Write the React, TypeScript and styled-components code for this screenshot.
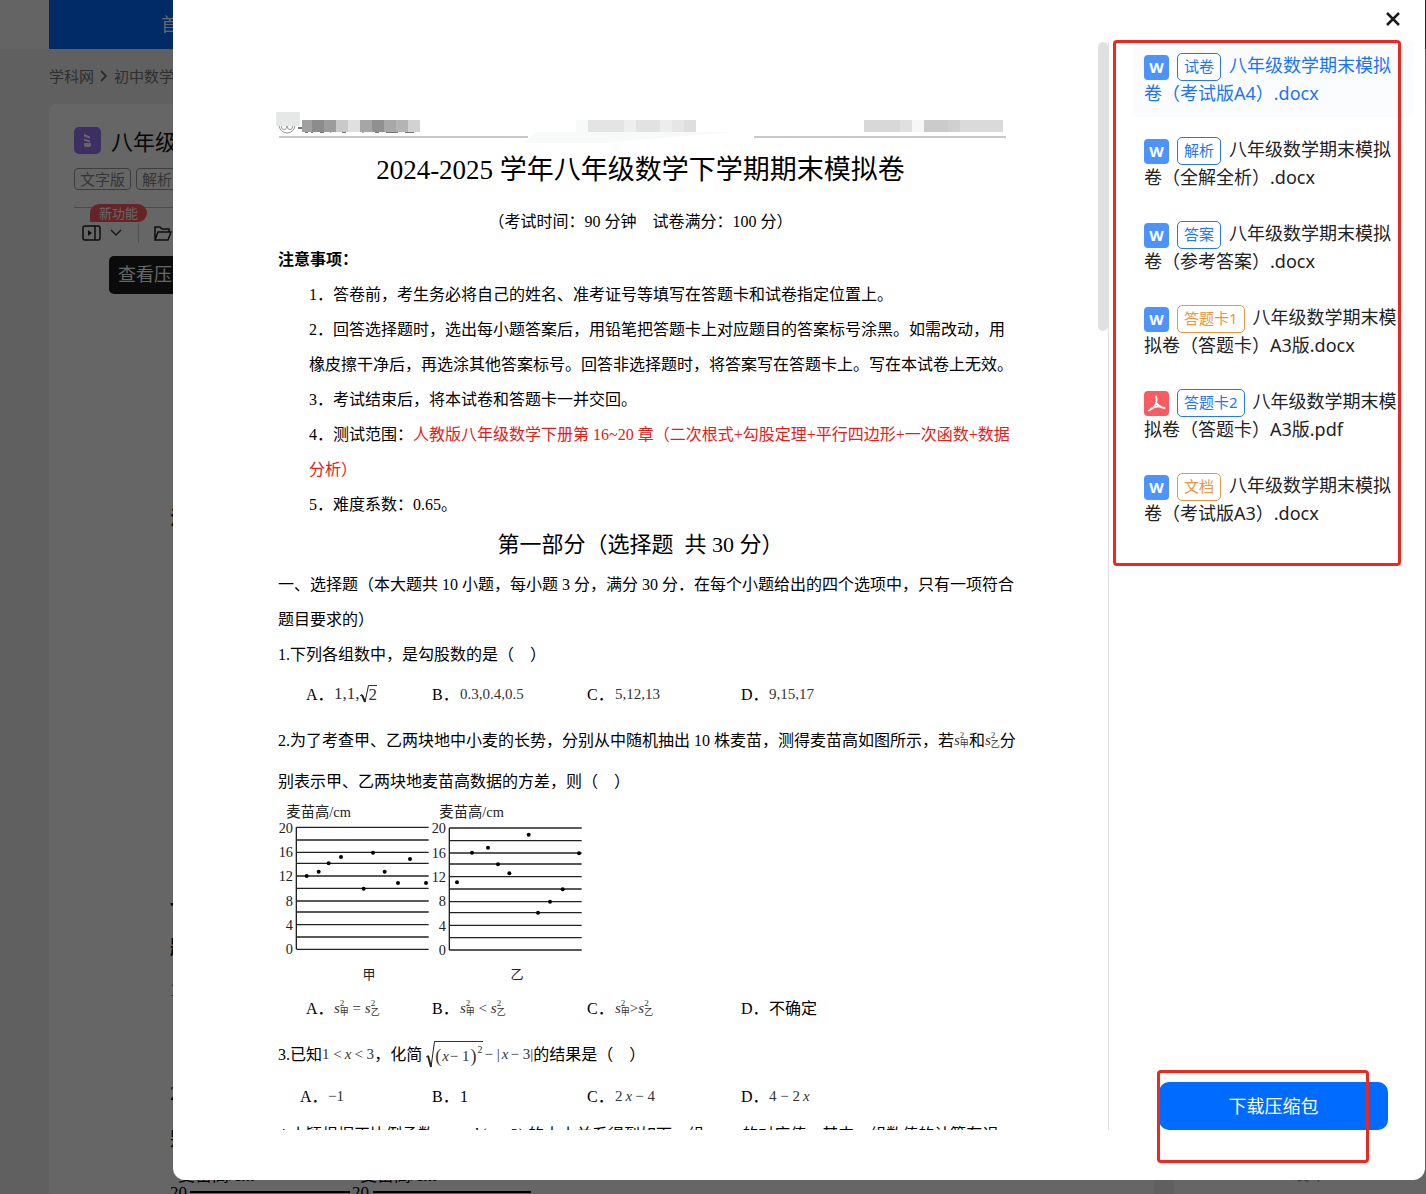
import React from "react";
import styled, { createGlobalStyle } from "styled-components";

const sans = `"Noto Sans", "Noto Sans CJK SC", sans-serif`;
const serif = `"Liberation Serif", "Noto Sans CJK SC", serif`;

const GlobalStyle = createGlobalStyle`
  * { box-sizing: border-box; }
  body { margin: 0; font-family: ${sans}; background: #f0f0f0; color: #222; }
  p, h1, h2, h3, ul, ol { margin: 0; padding: 0; font-weight: 400; }
  ul, ol { list-style: none; }
`;

/* ---------- page under the dialog ---------- */

const Page = styled.div`
  height: 100vh;
  overflow: hidden;
`;

const TopBar = styled.header`
  height: 49px;
  padding-left: 49px;
  background: #fafafa;
`;

const TopNav = styled.nav`
  height: 49px;
  padding-left: 112px;
  background: #006bff;
  a {
    color: #fff;
    font-size: 18px;
    line-height: 49px;
    text-decoration: none;
  }
`;

const Crumbs = styled.nav`
  display: flex;
  align-items: center;
  gap: 5px;
  height: 55px;
  padding: 0 0 2px 49px;
  font-size: 15px;
  white-space: nowrap;
  a {
    color: #777;
    text-decoration: none;
  }
`;

const Columns = styled.div`
  display: grid;
  grid-template-columns: minmax(0, 1fr) 252px;
  gap: 20px;
  height: 100%;
  padding-left: 49px;
`;

const Card = styled.section`
  padding: 19px 25px;
  border-radius: 8px 8px 0 0;
  background: #fff;
`;

const CardTitle = styled.h2`
  display: flex;
  align-items: center;
  gap: 10px;
  height: 34px;
  color: #111;
  font-size: 22px;
  white-space: nowrap;
`;

const Labels = styled.div`
  display: flex;
  gap: 5px;
  margin-top: 11px;
`;

const Label = styled.span`
  height: 22px;
  padding: 0 5px;
  border: 1px solid #999;
  border-radius: 4px;
  color: #888;
  font-size: 15px;
  line-height: 20px;
  white-space: nowrap;
`;

const Tools = styled.div`
  position: relative;
  display: flex;
  align-items: center;
  gap: 8px;
  height: 49px;
  margin-top: 17px;
  padding: 2px 8px 0;
  border-top: 1px solid #bbb;
  button {
    display: flex;
    padding: 0;
    border: 0;
    background: none;
  }
`;

const ToolRule = styled.span`
  width: 1px;
  height: 20px;
  margin: 0 6px 0 8px;
  background: #ccc;
`;

const NewBadge = styled.span`
  position: absolute;
  top: -4px;
  left: 16px;
  padding: 0 9px;
  border-radius: 9px 9px 9px 0;
  background: #ff5a60;
  color: #fff;
  font-size: 13px;
  line-height: 18px;
`;

const Hint = styled.span`
  display: inline-block;
  height: 38px;
  margin-left: 35px;
  padding: 0 9px;
  border-radius: 5px;
  background: #1c1c1c;
  color: #fff;
  font-size: 18px;
  line-height: 36px;
`;

const BackDoc = styled.div`
  padding-left: 96px;
  color: #000;
  font-family: ${serif};
  font-size: 19px;
  line-height: 42px;
`;

const BackLine = styled.p<{ $gap?: number; $bold?: boolean }>`
  margin-top: ${(p) => p.$gap ?? 0}px;
  font-weight: ${(p) => (p.$bold ? 700 : 400)};
  white-space: nowrap;
`;

const Aside = styled.aside`
  padding: 1058px 36px 0;
  background: #fff;
  color: #999;
  font-size: 16px;
  line-height: 24px;
  white-space: nowrap;
`;

/* ---------- dialog ---------- */

const Overlay = styled.div`
  position: fixed;
  inset: 0;
  display: flex;
  padding: 0 1px 14px 173px;
  background: rgba(0, 0, 0, 0.6);
`;

const Dialog = styled.div`
  display: flex;
  flex: 1;
  min-width: 0;
  border-radius: 0 0 12px 12px;
  background: #fff;
`;

const Preview = styled.main`
  display: flex;
  flex: 1;
  min-width: 0;
  margin: 42px 0 50px;
  border-right: 1px solid #e0e0e0;
  overflow: hidden;
`;

const Paper = styled.article`
  flex: 1;
  min-width: 0;
  padding: 68px 95px 0 105px;
  color: #000;
  font-family: ${serif};
  font-size: 16px;
  line-height: 35px;
  white-space: nowrap;
`;

const Thumb = styled.div`
  width: 10px;
  height: 289px;
  border-radius: 5px;
  background: #e0e0e0;
`;

const PaperHead = styled.svg`
  display: block;
  width: 100%;
  height: 32px;
  overflow: visible;
`;

const PaperTitle = styled.h1`
  margin-top: 8px;
  font-size: 27px;
  line-height: 40px;
  text-align: center;
`;

const PaperMeta = styled.p`
  margin-top: 14px;
  text-align: center;
`;

const NotesHead = styled.h3`
  margin-top: 3px;
  font-size: 16px;
  font-weight: 700;
`;

const Notes = styled.div`
  padding-left: 31px;
`;

const Red = styled.span`
  color: #e0201b;
`;

const PartTitle = styled.h2`
  font-size: 22px;
  line-height: 45px;
  text-align: center;
`;

const Stem = styled.p`
  display: flex;
  align-items: center;
  height: 40px;
  margin-top: 6px;
`;

const StemRest = styled.p`
  line-height: 43px;
`;

const LastLine = styled.p`
  margin-top: 1px;
`;

const Options = styled.ol<{ $indent: number }>`
  display: grid;
  grid-template-columns: ${(p) => 154 - p.$indent}px 155px 154px 1fr;
  margin-top: 2px;
  padding-left: ${(p) => p.$indent}px;
  li {
    display: flex;
    align-items: center;
    height: 40px;
  }
`;

const Letter = styled.span`
  width: 28px;
`;

const Formula = styled.span<{ $size?: number; $gap?: number }>`
  display: inline-flex;
  align-items: center;
  gap: ${(p) => p.$gap ?? 3}px;
  color: #333;
  font-size: ${(p) => p.$size ?? 15}px;
  line-height: 20px;
`;

const Symbol = styled.span`
  display: inline-flex;
  align-items: center;
  color: #333;
  font-size: 15px;
  line-height: 20px;
`;

const Scripts = styled.span`
  display: inline-flex;
  flex-direction: column;
  font-size: 9px;
  line-height: 9px;
`;

const Square = styled.sup`
  align-self: flex-start;
  font-size: 10px;
  line-height: 10px;
`;

const Root = styled.span`
  display: inline-flex;
  svg {
    flex: none;
  }
`;

const Radicand = styled.span<{ $tall?: boolean }>`
  display: inline-flex;
  align-items: center;
  gap: ${(p) => (p.$tall ? 1 : 0)}px;
  height: ${(p) => (p.$tall ? 27 : 18)}px;
  padding-top: ${(p) => (p.$tall ? 3 : 1)}px;
  border-top: 1px solid #333;
`;

const Paren = styled.span`
  font-size: 18px;
`;

const Chart = styled.svg`
  display: block;
  width: 306px;
  height: 183px;
`;

/* ---------- file list ---------- */

const Side = styled.aside`
  position: relative;
  display: flex;
  flex: none;
  flex-direction: column;
  width: 316px;
  padding: 0 12px 50px 25px;
`;

const CloseButton = styled.button`
  display: flex;
  align-self: flex-end;
  align-items: flex-end;
  height: 41px;
  margin-right: 12px;
  padding: 0 0 14px;
  border: 0;
  background: none;
  cursor: pointer;
`;

const Files = styled.ul`
  display: flex;
  flex: 1;
  flex-direction: column;
  gap: 8px;
`;

const FileItem = styled.li<{ $active?: boolean }>`
  padding: 10px 16px 10px 10px;
  background: ${(p) => (p.$active ? "#fafcfd" : "transparent")};
  a {
    display: block;
    color: ${(p) => (p.$active ? "#1d74f2" : "#222")};
    font-size: 18px;
    line-height: 28px;
    text-decoration: none;
    word-break: break-all;
  }
`;

const FileIcon = styled.svg`
  width: 25px;
  height: 25px;
  margin: -4px 8px -4px 0;
  vertical-align: middle;
`;

const Tag = styled.span<{ $tone: "blue" | "orange" }>`
  display: inline-block;
  height: 28px;
  margin: -4px 8px -4px 0;
  padding: 0 6px;
  border: 1px solid ${(p) => (p.$tone === "blue" ? "#2a78e4" : "#e09a48")};
  border-radius: 5px;
  color: ${(p) => (p.$tone === "blue" ? "#2277ee" : "#ea953c")};
  background: #fff;
  font-size: 15px;
  line-height: 25px;
  vertical-align: middle;
`;

const Download = styled.button`
  height: 48px;
  margin: 0 25px;
  padding: 0 0 3px;
  border: 0;
  border-radius: 10px;
  background: #006bff;
  color: #fff;
  font-family: ${sans};
  font-size: 18px;
  cursor: pointer;
`;

const Mark = styled.div<{ $top?: number; $bottom?: number; $left: number; $right: number; $height: number }>`
  position: absolute;
  top: ${(p) => (p.$top === undefined ? "auto" : `${p.$top}px`)};
  bottom: ${(p) => (p.$bottom === undefined ? "auto" : `${p.$bottom}px`)};
  left: ${(p) => p.$left}px;
  right: ${(p) => p.$right}px;
  height: ${(p) => p.$height}px;
  border: 3px solid #ea2a20;
  border-radius: 4px;
  pointer-events: none;
`;

type FileEntry = { kind: "word" | "pdf"; tag: string; tone: "blue" | "orange"; name: string };

const files: FileEntry[] = [
  { kind: "word", tag: "试卷", tone: "blue", name: "八年级数学期末模拟卷（考试版A4）.docx" },
  { kind: "word", tag: "解析", tone: "blue", name: "八年级数学期末模拟卷（全解全析）.docx" },
  { kind: "word", tag: "答案", tone: "blue", name: "八年级数学期末模拟卷（参考答案）.docx" },
  { kind: "word", tag: "答题卡1", tone: "orange", name: "八年级数学期末模拟卷（答题卡）A3版.docx" },
  { kind: "pdf", tag: "答题卡2", tone: "blue", name: "八年级数学期末模拟卷（答题卡）A3版.pdf" },
  { kind: "word", tag: "文档", tone: "orange", name: "八年级数学期末模拟卷（考试版A3）.docx" },
];

function KindIcon({ kind }: { kind: FileEntry["kind"] }) {
  return (
    <FileIcon viewBox="0 0 25 25" aria-hidden="true">
      <rect width="25" height="25" rx="4" fill={kind === "word" ? "#4c94fb" : "#f65c62"} />
      {kind === "word" ? (
        <text x="12.5" y="18" fill="#fff" fontFamily='"Noto Sans", sans-serif' fontSize="15" fontWeight="700" textAnchor="middle">
          W
        </text>
      ) : (
        <path
          d="M12 5.500q1.500 3 .3 6.500Q10.500 17 5 19.500M12 11.500q2.500 4.500 8.500 5.500M7 17.800q4.500-2.600 9.500-2.300"
          fill="none"
          stroke="#fff"
          strokeLinecap="round"
          strokeWidth="1.800"
        />
      )}
    </FileIcon>
  );
}

function Variance({ field }: { field: string }) {
  return (
    <Symbol>
      <i>s</i>
      <Scripts>
        <span>2</span>
        <span>{field}</span>
      </Scripts>
    </Symbol>
  );
}

function Option({ letter, children }: { letter: string; children: React.ReactNode }) {
  return (
    <li>
      <Letter>{letter}．</Letter>
      {children}
    </li>
  );
}

const gridY = [470, 508, 545, 578, 616, 653, 691, 724, 762, 799, 836];
const ticks = ["20", "16", "12", "8", "4", "0"];

const plots = [
  {
    name: "甲",
    x: 109,
    dy: 0,
    nameX: 327,
    dots: [[140, 616], [176, 603], [206, 578], [243, 559], [311, 654], [339, 546], [374, 603], [414, 637], [450, 565], [498, 637]],
  },
  {
    name: "乙",
    x: 568,
    dy: 2,
    nameX: 771,
    dots: [[591, 635], [636, 546], [684, 531], [714, 581], [748, 608], [806, 492], [834, 726], [870, 693], [908, 656], [957, 548]],
  },
];

function WheatChart() {
  return (
    <Chart viewBox="54 397 918 549" role="img" aria-label="麦苗高">
      {plots.map((plot) => (
        <g key={plot.name} fontFamily='"Liberation Serif", "Noto Sans CJK SC", serif' fontSize="43" fill="#222">
          <text x={plot.x - 30} y={438}>麦苗高/cm</text>
          {gridY.map((y) => (
            <line key={y} x1={plot.x} x2={plot.x + 397} y1={y + plot.dy} y2={y + plot.dy} stroke="#222" strokeWidth="4" />
          ))}
          <line x1={plot.x} x2={plot.x} y1={470 + plot.dy} y2={836 + plot.dy} stroke="#222" strokeWidth="4" />
          {ticks.map((tick, i) => (
            <text key={tick} x={plot.x - 10} y={486 + plot.dy + i * 73} textAnchor="end">{tick}</text>
          ))}
          {plot.dots.map(([x, y]) => (
            <circle key={x} cx={x} cy={y} r="6" fill="#000" />
          ))}
          <text x={plot.nameX} y={926} fontSize="39" textAnchor="middle">{plot.name}</text>
        </g>
      ))}
    </Chart>
  );
}

const mosaic: [number, number, string][] = [
  [24, 10, "#a0a0a0"], [34, 12, "#8c8c8c"], [46, 12, "#9c9c9c"], [58, 12, "#c9c9c9"], [70, 12, "#e0e0e0"],
  [82, 12, "#a6a6a6"], [94, 12, "#909090"], [106, 12, "#a8a8a8"], [118, 12, "#b4b4b4"], [130, 12, "#d2d2d2"],
  [298, 12, "#f8f9f9"], [310, 36, "#e4e4e4"], [346, 12, "#eeeeee"], [358, 24, "#e2e2e2"], [382, 12, "#ededed"],
  [394, 12, "#e6e6e6"], [406, 12, "#dedede"], [586, 36, "#d8d8d8"], [622, 12, "#e0e0e0"], [634, 12, "#f7f7f7"],
  [646, 24, "#cbcbcb"], [670, 12, "#d0d0d0"], [682, 43, "#dadada"],
];

function HeaderStrip() {
  return (
    <PaperHead aria-hidden="true">
      <g fill="none" stroke="#999">
        <circle cx="9" cy="15" r="8" />
        <circle cx="6" cy="17" r="2.500" />
        <circle cx="12" cy="17" r="2.500" />
      </g>
      <path d="M20 18h8M27 22h3M33 22h2M42 22h4M52 22l3-2M64 22h4M84 22l4-2M97 22h4M108 22h12M127 22h9" stroke="#777" strokeWidth="2" />
      <rect x="-2" y="2" width="24" height="14" fill="#e6e8e8" />
      {mosaic.map(([x, w, fill]) => (
        <rect key={x} x={x} y="10" width={w} height="12" fill={fill} />
      ))}
      <path d="M246 33l12-11h200l-90 7-40 4z" fill="#f8f9f9" />
      <path d="M1 27h249M476 27h252" stroke="#c8c8c8" strokeWidth="2" />
    </PaperHead>
  );
}

function RootSign({ height }: { height: number }) {
  return (
    <svg width="9" height={height} viewBox={`0 0 9 ${height}`} fill="none" stroke="#222" aria-hidden="true">
      <path d={`M0 ${height * 0.6}l2-1.500`} />
      <path d={`M2 ${height * 0.55}L5 ${height - 1}`} strokeWidth="2" />
      <path d={`M5 ${height - 1}L8.500 0.500H9`} />
    </svg>
  );
}

export default function App() {
  return (
    <>
      <GlobalStyle />
      <Page aria-hidden="true">
        <TopBar>
          <TopNav><a href="#home">首页</a></TopNav>
        </TopBar>
        <Crumbs>
          <a href="#site">学科网</a>
          <svg width="10" height="12" viewBox="0 0 10 12" fill="none" stroke="#777" strokeWidth="2">
            <path d="M2 1l5 5-5 5" />
          </svg>
          <a href="#math">初中数学</a>
        </Crumbs>
        <Columns>
          <Card>
            <CardTitle>
              <svg width="27" height="27" viewBox="0 0 27 27">
                <rect width="27" height="27" rx="5" fill="#9b75f5" />
                <path d="M10 7l6 2.500v2l-6-2zM10 11.500l6 2v2l-6-2zM10 16h7v2q0 2-2 2h-3q-2 0-2-2z" fill="#fff" />
              </svg>
              八年级
            </CardTitle>
            <Labels>
              <Label>文字版</Label>
              <Label>解析</Label>
            </Labels>
            <Tools>
              <NewBadge>新功能</NewBadge>
              <button aria-label="预览">
                <svg width="20" height="18" viewBox="0 0 20 18" fill="none" stroke="#222" strokeWidth="1.500">
                  <rect x="1" y="2" width="17" height="14" rx="2" />
                  <path d="M13 2v14" />
                  <path d="M6 6l4 3-4 3z" fill="#222" stroke="none" />
                </svg>
              </button>
              <button aria-label="展开">
                <svg width="12" height="8" viewBox="0 0 12 8" fill="none" stroke="#444" strokeWidth="1.500">
                  <path d="M1 1l5 5 5-5" />
                </svg>
              </button>
              <ToolRule />
              <button aria-label="文件夹">
                <svg width="20" height="18" viewBox="0 0 20 18" fill="none" stroke="#222" strokeWidth="1.500">
                  <path d="M2 16V3h5l2 2h7v3M2 16l3-8h13l-3 8z" />
                </svg>
              </button>
            </Tools>
            <Hint>查看压缩包</Hint>
            <BackDoc>
              <BackLine $gap={204} $bold>注意</BackLine>
              <BackLine $gap={345} $bold>一、</BackLine>
              <BackLine $bold>题目</BackLine>
              <BackLine>1.下列</BackLine>
              <BackLine $gap={62}>2.为</BackLine>
              <BackLine $gap={4}>别表</BackLine>
              <svg width="400" height="40" viewBox="0 0 400 40" fontSize="17" display="block">
                <text x="8" y="20">麦苗高/cm</text>
                <text x="190" y="20">麦苗高/cm</text>
                <text x="0" y="37">20</text>
                <text x="182" y="37">20</text>
                <path d="M20 31h160M203 31h158" stroke="#000" strokeWidth="2" />
              </svg>
            </BackDoc>
          </Card>
          <Aside>2025-06-19发布</Aside>
        </Columns>
      </Page>

      <Overlay>
        <Dialog role="dialog" aria-modal="true" aria-label="查看压缩包">
          <Preview>
            <Paper>
              <HeaderStrip />
              <PaperTitle>2024-2025 学年八年级数学下学期期末模拟卷</PaperTitle>
              <PaperMeta>（考试时间：90 分钟　试卷满分：100 分）</PaperMeta>
              <NotesHead>注意事项：</NotesHead>
              <Notes>
                <p>1．答卷前，考生务必将自己的姓名、准考证号等填写在答题卡和试卷指定位置上。</p>
                <p>2．回答选择题时，选出每小题答案后，用铅笔把答题卡上对应题目的答案标号涂黑。如需改动，用</p>
                <p>橡皮擦干净后，再选涂其他答案标号。回答非选择题时，将答案写在答题卡上。写在本试卷上无效。</p>
                <p>3．考试结束后，将本试卷和答题卡一并交回。</p>
                <p>4．测试范围：<Red>人教版八年级数学下册第 16~20 章（二次根式+勾股定理+平行四边形+一次函数+数据</Red></p>
                <p><Red>分析）</Red></p>
                <p>5．难度系数：0.65。</p>
              </Notes>
              <PartTitle>第一部分（选择题&nbsp; 共 30 分）</PartTitle>
              <p>一、选择题（本大题共 10 小题，每小题 3 分，满分 30 分．在每个小题给出的四个选项中，只有一项符合</p>
              <p>题目要求的）</p>
              <p>1.下列各组数中，是勾股数的是（　）</p>
              <Options $indent={28}>
                <Option letter="A">
                  <Formula $size={17} $gap={0}>
                    1,1,
                    <Root><RootSign height={18} /><Radicand>2</Radicand></Root>
                  </Formula>
                </Option>
                <Option letter="B"><Formula>0.3,0.4,0.5</Formula></Option>
                <Option letter="C"><Formula>5,12,13</Formula></Option>
                <Option letter="D"><Formula>9,15,17</Formula></Option>
              </Options>
              <Stem>
                2.为了考查甲、乙两块地中小麦的长势，分别从中随机抽出 10 株麦苗，测得麦苗高如图所示，若
                <Variance field="甲" />和<Variance field="乙" />分
              </Stem>
              <StemRest>别表示甲、乙两块地麦苗高数据的方差，则（　）</StemRest>
              <WheatChart />
              <Options $indent={28}>
                <Option letter="A"><Variance field="甲" /><Formula>&nbsp;=&nbsp;</Formula><Variance field="乙" /></Option>
                <Option letter="B"><Variance field="甲" /><Formula>&nbsp;&lt;&nbsp;</Formula><Variance field="乙" /></Option>
                <Option letter="C"><Variance field="甲" /><Formula>&gt;</Formula><Variance field="乙" /></Option>
                <Option letter="D">不确定</Option>
              </Options>
              <Stem>
                3.已知<Formula>1 &lt; <i>x</i> &lt; 3</Formula>，化简&nbsp;
                <Formula $gap={2}>
                  <Root>
                    <RootSign height={27} />
                    <Radicand $tall><Paren>(</Paren><i>x</i> − 1<Paren>)</Paren><Square>2</Square></Radicand>
                  </Root>
                  − |<i>x</i> − 3|
                </Formula>
                的结果是（　）
              </Stem>
              <Options $indent={22}>
                <Option letter="A"><Formula>−1</Formula></Option>
                <Option letter="B">1</Option>
                <Option letter="C"><Formula>2<i>x</i> − 4</Formula></Option>
                <Option letter="D"><Formula>4 − 2<i>x</i></Formula></Option>
              </Options>
              <LastLine>4.小颖根据正比例函数　<i>y</i> = <i>k</i>(<i>x</i> − 2) 的大小关系得到如下一组 <i>x</i>、<i>y</i> 的对应值，其中一组数值的计算有误</LastLine>
            </Paper>
            <Thumb />
          </Preview>

          <Side>
            <CloseButton aria-label="关闭">
              <svg width="16" height="16" viewBox="0 0 16 16" fill="none" stroke="#1a1a1a" strokeWidth="2.500">
                <path d="M2 2l12 12M14 2L2 14" />
              </svg>
            </CloseButton>
            <Files>
              {files.map((file, i) => (
                <FileItem key={file.tag} $active={i === 0}>
                  <a href={`#file-${i + 1}`}>
                    <KindIcon kind={file.kind} />
                    <Tag $tone={file.tone}>{file.tag}</Tag>
                    {file.name}
                  </a>
                </FileItem>
              ))}
            </Files>
            <Download>下载压缩包</Download>
            <Mark $top={40} $left={4} $right={24} $height={526} />
            <Mark $bottom={17} $left={48} $right={56} $height={93} />
          </Side>
        </Dialog>
      </Overlay>
    </>
  );
}
